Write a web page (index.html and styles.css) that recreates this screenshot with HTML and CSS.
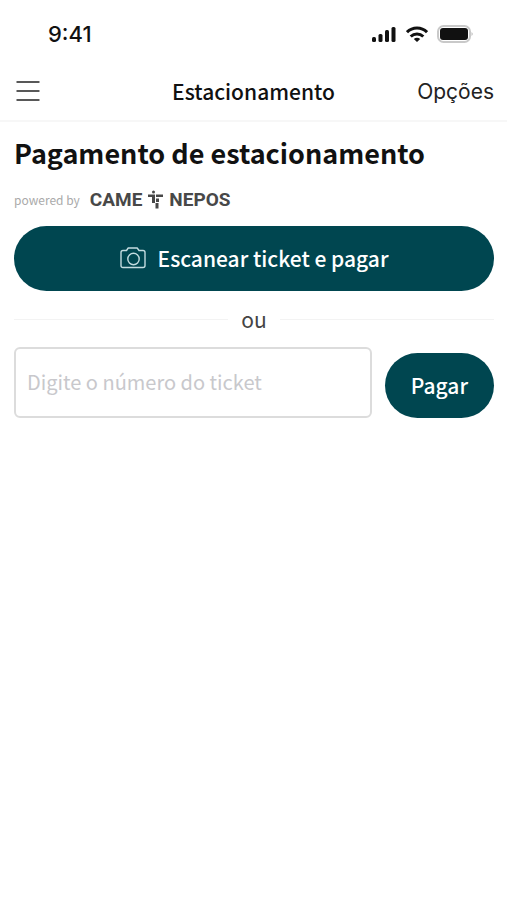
FILE: index.html
```html
<!DOCTYPE html>
<html lang="pt-BR">
<head>
<meta charset="utf-8">
<meta name="viewport" content="width=device-width, initial-scale=1">
<title>Estacionamento</title>
<link rel="stylesheet" href="styles.css">
</head>
<body>
<div class="status-bar">
  <span class="clock">9:41</span>
  <div class="status-icons">
    <svg width="25" height="18" viewBox="0 0 25 18" fill="#111" aria-hidden="true">
      <rect x="0" y="12" width="4" height="5" rx="1.5"/>
      <rect x="6.500" y="9" width="4" height="8" rx="1.5"/>
      <rect x="13" y="5" width="4" height="12" rx="1.5"/>
      <rect x="19.500" y="2" width="4" height="15" rx="1.5"/>
    </svg>
    <svg width="22" height="18" viewBox="0 0 22 18" fill="none" stroke="#111" stroke-width="3" aria-hidden="true">
      <path d="M1 7.2C6.5 1.7 15.500 1.700 21 7.200"/>
      <path d="M4.700 11.500C8.300 8 13.700 8 17.300 11.500"/>
      <path d="M11 17L7.800 14Q11 11.700 14.200 14Z" fill="#111" stroke="none"/>
    </svg>
    <svg width="37" height="18" viewBox="0 0 37 18" aria-hidden="true">
      <rect x="1" y="1" width="32" height="16" rx="5.500" fill="#fff" stroke="#c9c9c9" stroke-width="2"/>
      <rect x="3" y="3" width="28" height="12" rx="3" fill="#111"/>
      <path d="M34.500 7Q37 9 34.500 11Z" fill="#bbb"/>
    </svg>
  </div>
</div>
<header class="nav">
  <button class="menu" type="button" aria-label="Menu">
    <svg width="24" height="20" viewBox="0 0 24 20" stroke="#222" stroke-width="1.400" stroke-linecap="round" aria-hidden="true">
      <path d="M1 1H23M1 10H23M1 19H23"/>
    </svg>
  </button>
  <h1 class="nav-title">Estacionamento</h1>
  <a class="options" href="#">Opções</a>
</header>
<main class="content">
  <h2 class="heading">Pagamento de estacionamento</h2>
  <div class="powered">
    <span class="powered-label">powered by</span>
    <span class="brand">
      <span>CAME</span>
      <svg width="15" height="20" viewBox="0 0 15 20" fill="#484848" aria-hidden="true">
        <circle cx="5.500" cy="2" r="1.500"/>
        <path d="M0 4.500H7V13H4V7H0ZM8 4.500H15V7H8ZM8 8.500H11V12H8ZM7.500 13H10.500V18.500H7.500Z"/>
      </svg>
      <span>NEPOS</span>
    </span>
  </div>
  <button class="btn scan" type="button">
    <svg width="26" height="22" viewBox="0 0 26 22" fill="none" stroke="#c3dce0" stroke-width="1.400" stroke-linejoin="round" aria-hidden="true">
      <path d="M3 3.500H6.500L8.200 1H17.200L19 3.500H23Q25 3.500 25 5.500V18.500Q25 20.500 23 20.500H3Q1 20.500 1 18.500V5.500Q1 3.500 3 3.500Z"/>
      <circle cx="13.500" cy="12" r="5.700"/>
    </svg>
    <span>Escanear ticket e pagar</span>
  </button>
  <div class="divider">ou</div>
  <form class="ticket-form">
    <input class="ticket" type="text" placeholder="Digite o número do ticket" aria-label="Número do ticket">
    <button class="btn pay" type="button">Pagar</button>
  </form>
</main>
</body>
</html>
```
FILE: styles.css
```css
* {
  box-sizing: border-box;
}

body {
  margin: 0;
  background: #fff;
  color: #111;
  font-family: "Noto Sans CJK SC", "Noto Sans", sans-serif;
}

button,
input {
  font: inherit;
}

.status-bar {
  display: flex;
  align-items: center;
  justify-content: space-between;
  height: 62px;
  padding: 6px 33px 0 48px;
}

.clock {
  font: 500 22px/28px Inter, sans-serif;
}

.status-icons {
  display: flex;
  gap: 9px;
}

.nav {
  display: grid;
  grid-template-columns: 1fr auto 1fr;
  align-items: center;
  height: 60px;
  padding: 0 13px;
  border-bottom: 2px solid #f7f7f7;
}

.menu {
  display: flex;
  justify-self: start;
  padding: 0 3px;
  border: 0;
  background: none;
}

.nav-title {
  margin: 0;
  font-size: 21px;
  font-weight: 500;
  line-height: 30px;
}

.options {
  justify-self: end;
  padding-top: 2px;
  color: #222;
  font: 400 21px/30px Inter, sans-serif;
  text-decoration: none;
}

.content {
  padding: 12px 13px 12px 14px;
}

.heading {
  margin: 0;
  font-size: 27px;
  font-weight: 700;
  line-height: 38px;
}

.powered {
  display: flex;
  align-items: center;
  gap: 10px;
  height: 54px;
  padding-top: 2px;
}

.powered-label {
  color: #aaa;
  font-size: 12px;
  line-height: 20px;
}

.brand {
  display: flex;
  align-items: center;
  gap: 6px;
  color: #484848;
  font: 700 19px/24px Roboto, sans-serif;
}

.btn {
  display: flex;
  align-items: center;
  justify-content: center;
  height: 65px;
  padding: 0 26px 2px;
  border: 0;
  border-radius: 33px;
  background: #004650;
  color: #fff;
  font-size: 21px;
  font-weight: 500;
  line-height: 30px;
}

.scan {
  gap: 12px;
  width: 100%;
}

.divider {
  display: flex;
  align-items: center;
  gap: 13px;
  height: 56px;
  color: #444;
  font-size: 21px;
  line-height: 30px;
}

.divider::before,
.divider::after {
  content: "";
  flex: 1;
  height: 1px;
  background: #f3f3f3;
}

.ticket-form {
  display: flex;
  align-items: flex-end;
  gap: 13px;
}

.ticket {
  flex: 1;
  min-width: 0;
  height: 71px;
  padding: 0 11px 2px;
  border: 2px solid #dcdcdc;
  border-radius: 6px;
  background: #fff;
  font-size: 20px;
}

.ticket::placeholder {
  color: #c8c8cc;
  opacity: 1;
}
```
